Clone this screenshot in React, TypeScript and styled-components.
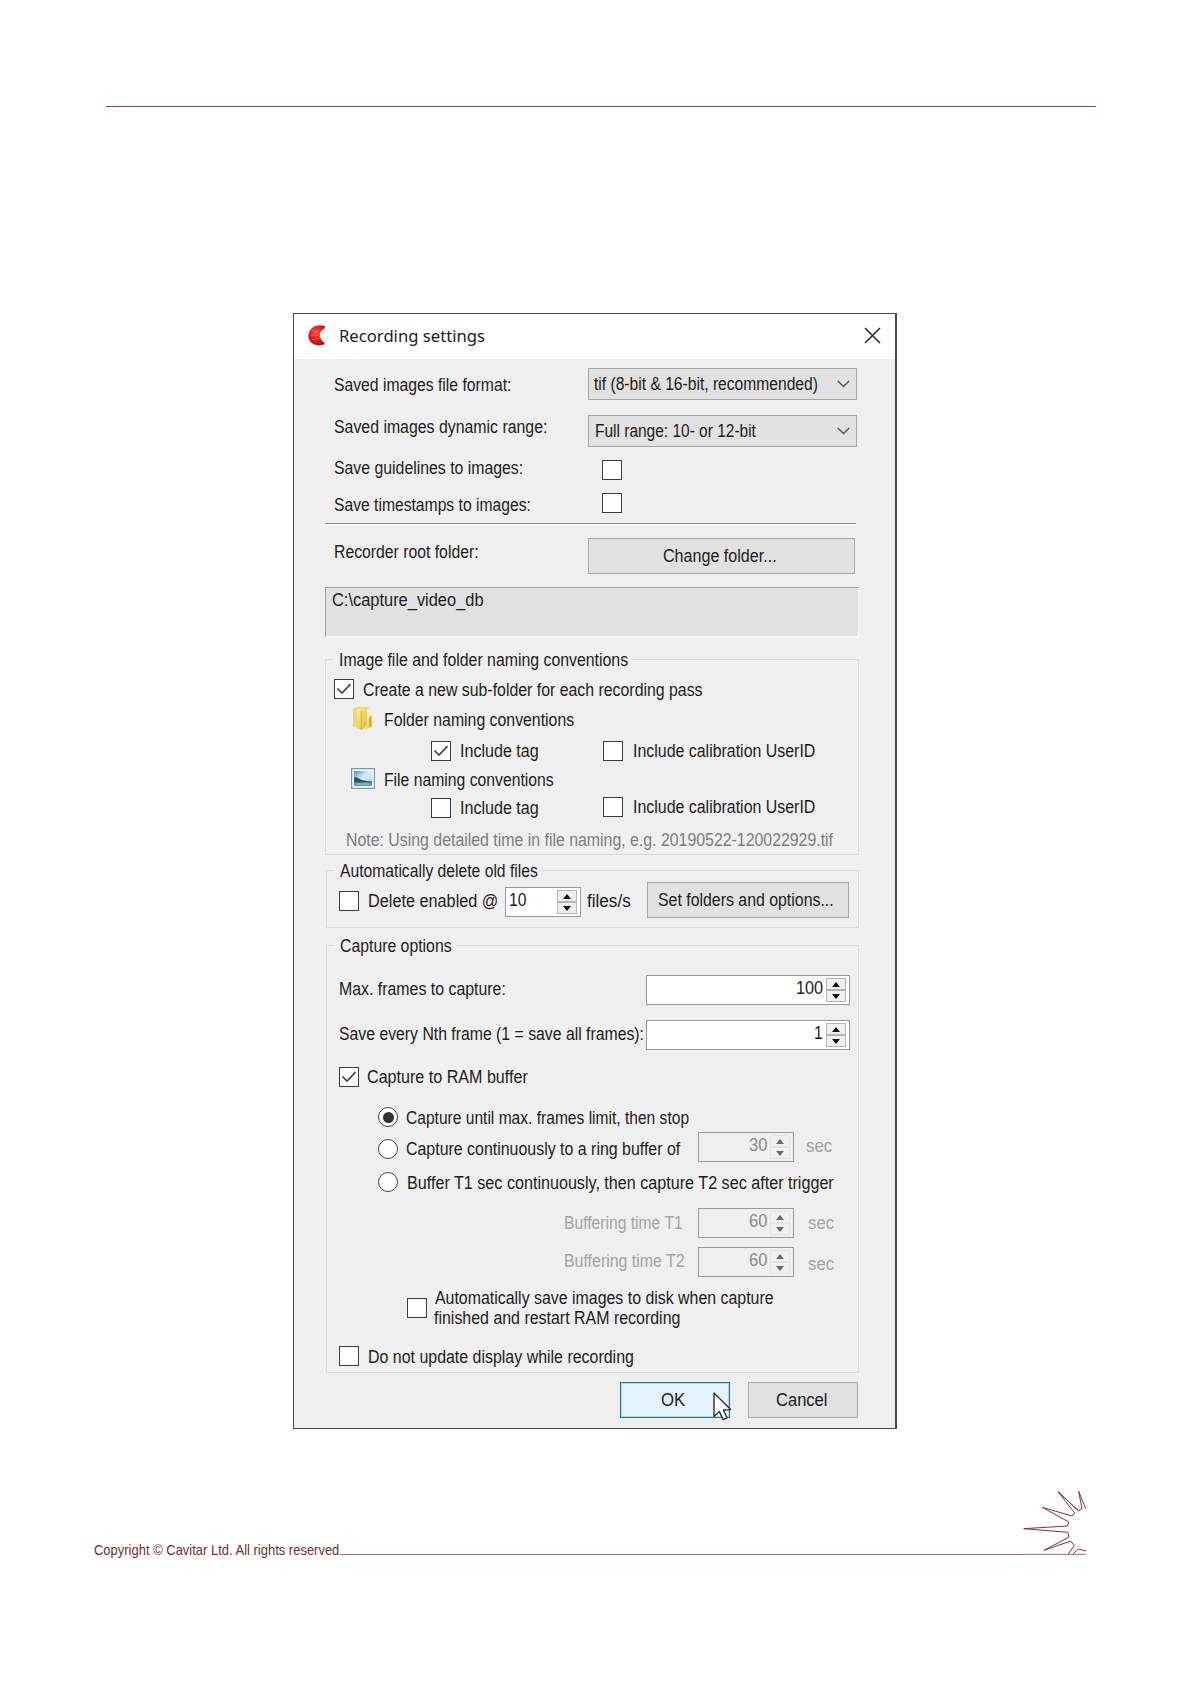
import React, { useLayoutEffect, useRef, useState } from "react";
import styled, { createGlobalStyle, css } from "styled-components";

const App = () => {
  return (
    <Page>
      <GlobalStyle />
      <HeaderRule />
      <Dialog>
        <TitleBar>
          <AppLogo />
          <Title>
            <Fit w={147}>Recording settings</Fit>
          </Title>
          <CloseIcon />
        </TitleBar>

        <Body>
          <Row h={48}>
            <Text gap={8} dy={16} w={178}>Saved images file format:</Text>
            <Select gap={77} dy={9} pad={5}>
              <Fit w={225}>tif (8-bit &amp; 16-bit, recommended)</Fit>
              <ChevronIcon />
            </Select>
          </Row>
          <Row h={46}>
            <Text gap={8} dy={10} w={214}>Saved images dynamic range:</Text>
            <Select gap={41} dy={8} pad={6}>
              <Fit w={162}>Full range: 10- or 12-bit</Fit>
              <ChevronIcon />
            </Select>
          </Row>
          <Row h={33}>
            <Text gap={8} dy={5} w={190}>Save guidelines to images:</Text>
            <Check gap={79} dy={7} />
          </Row>
          <Row h={37}>
            <Text gap={8} dy={9} w={198}>Save timestamps to images:</Text>
            <Check gap={71} dy={7} />
          </Row>
          <Divider />
          <Row h={61}>
            <Text gap={8} dy={16} w={146}>Recorder root folder:</Text>
            <Button gap={109} dy={12} width={267}>
              <Fit w={115}>Change folder...</Fit>
            </Button>
          </Row>
          <PathBox>
            <Fit w={153}>C:\capture_video_db</Fit>
          </PathBox>

          <Group top={10} height={207}>
            <Legend>
              <Fit w={290}>Image file and folder naming conventions</Fit>
            </Legend>
            <Row h={34}>
              <Check gap={8} dy={9} checked />
              <Text gap={8} dy={10} w={341}>Create a new sub-folder for each recording pass</Text>
            </Row>
            <Row h={35}>
              <FolderIcon />
              <Text gap={10} dy={6} w={191}>Folder naming conventions</Text>
            </Row>
            <Row h={27}>
              <Check gap={105} dy={2} checked />
              <Text gap={8} dy={2} w={80}>Include tag</Text>
              <Check gap={64} dy={2} />
              <Text gap={9} dy={2} w={183}>Include calibration UserID</Text>
            </Row>
            <Row h={28}>
              <PictureIcon />
              <Text gap={8} dy={4} w={171}>File naming conventions</Text>
            </Row>
            <Row h={32}>
              <Check gap={105} dy={4} />
              <Text gap={8} dy={4} w={80}>Include tag</Text>
              <Check gap={64} dy={3} />
              <Text gap={9} dy={3} w={183}>Include calibration UserID</Text>
            </Row>
            <Row h={24}>
              <Text gap={19} dy={4} w={488} color="#7d7d7d">
                Note: Using detailed time in file naming, e.g. 20190522-120022929.tif
              </Text>
            </Row>
          </Group>

          <Group top={4} left={1} height={69}>
            <Legend>
              <Fit w={199}>Automatically delete old files</Fit>
            </Legend>
            <Row h={40}>
              <Check gap={12} dy={10} />
              <Text gap={8} dy={10} w={131}>Delete enabled @</Text>
              <Spinner gap={7} dy={6} width={76} value="10" w={18} align="left" />
              <Text gap={5} dy={10} w={45}>files/s</Text>
              <Button gap={16} dy={1} width={202}>
                <Fit w={177}>Set folders and options...</Fit>
              </Button>
            </Row>
          </Group>

          <Group top={6} left={1} height={439}>
            <Legend>
              <Fit w={113}>Capture options</Fit>
            </Legend>
            <Row h={56}>
              <Text gap={11} dy={23} w={168}>Max. frames to capture:</Text>
              <Spinner gap={140} dy={19} width={204} value="100" w={28} />
            </Row>
            <Row h={46}>
              <Text gap={11} dy={12} w={306}>Save every Nth frame (1 = save all frames):</Text>
              <Spinner gap={2} dy={8} width={204} value="1" w={10} />
            </Row>
            <Row h={42}>
              <Check gap={12} dy={9} checked />
              <Text gap={7} dy={9} w={162}>Capture to RAM buffer</Text>
            </Row>
            <Row h={31}>
              <Radio gap={51} dy={7} checked />
              <Text gap={7} dy={8} w={284}>Capture until max. frames limit, then stop</Text>
            </Row>
            <Row h={34}>
              <Radio gap={51} dy={8} />
              <Text gap={7} dy={8} w={275}>Capture continuously to a ring buffer of</Text>
              <Spinner gap={18} dy={1} width={96} value="30" w={19} disabled />
              <Text gap={11} dy={5} w={27} color="#a3a3a3">sec</Text>
            </Row>
            <Row h={41}>
              <Radio gap={51} dy={7} />
              <Text gap={8} dy={8} w={428}>Buffer T1 sec continuously, then capture T2 sec after trigger</Text>
            </Row>
            <Row h={39}>
              <Text gap={236} dy={7} w={120} color="#a3a3a3">Buffering time T1</Text>
              <Spinner gap={15} dy={2} width={96} value="60" w={19} disabled />
              <Text gap={13} dy={7} w={27} color="#a3a3a3">sec</Text>
            </Row>
            <Row h={39}>
              <Text gap={236} dy={6} w={122} color="#a3a3a3">Buffering time T2</Text>
              <Spinner gap={13} dy={2} width={96} value="60" w={19} disabled />
              <Text gap={13} dy={9} w={27} color="#a3a3a3">sec</Text>
            </Row>
            <Row h={56}>
              <Check gap={80} dy={14} />
              <Lines>
                <Text gap={1} dy={4} w={340}>Automatically save images to disk when capture</Text>
                <Text gap={0} dy={0} w={247}>finished and restart RAM recording</Text>
              </Lines>
            </Row>
            <Row h={28}>
              <Check gap={12} dy={6} />
              <Text gap={8} dy={7} w={267}>Do not update display while recording</Text>
            </Row>
          </Group>

          <Row h={46}>
            <Button gap={295} dy={9} width={110} focused>
              <Fit w={25}>OK</Fit>
              <CursorIcon />
            </Button>
            <Button gap={18} dy={9} width={110}>
              <Fit w={52}>Cancel</Fit>
            </Button>
          </Row>
        </Body>
      </Dialog>

      <Footer>
        <Copyright>
          <Fit w={246}>Copyright © Cavitar Ltd. All rights reserved</Fit>
        </Copyright>
        <FooterRule />
        <StarIcon />
      </Footer>
    </Page>
  );
};
export default App;

const Fit = ({ w, children }: { w: number; children: React.ReactNode }) => {
  const ref = useRef<HTMLSpanElement>(null);
  const [scale, setScale] = useState(1);
  useLayoutEffect(() => {
    if (ref.current) setScale((w - 1) / ref.current.offsetWidth);
  }, [w]);
  return (
    <FitBox $w={w}>
      <FitText ref={ref} style={{ transform: `scaleX(${scale})` }}>
        {children}
      </FitText>
    </FitBox>
  );
};

type PlaceProps = { gap?: number; dy?: number };

type TextProps = PlaceProps & { w: number; color?: string; children: React.ReactNode };

const Text = ({ gap, dy, w, color, children }: TextProps) => (
  <Label $gap={gap} $dy={dy} $color={color}>
    <Fit w={w}>{children}</Fit>
  </Label>
);

const Select = ({ gap, dy, pad, children }: PlaceProps & { pad: number; children: React.ReactNode }) => (
  <SelectBox $gap={gap} $dy={dy} $pad={pad}>{children}</SelectBox>
);

type ButtonProps = PlaceProps & { width: number; focused?: boolean; children: React.ReactNode };

const Button = ({ gap, dy, width, focused, children }: ButtonProps) => (
  <PushButton type="button" $gap={gap} $dy={dy} $width={width} $focused={focused}>
    {children}
  </PushButton>
);

const Check = ({ gap, dy, checked }: PlaceProps & { checked?: boolean }) => (
  <CheckBox $gap={gap} $dy={dy}>
    {checked && (
      <svg width="16" height="16" viewBox="0 0 16 16" fill="none">
        <path d="M1.5 7.5 L6 12 L14.5 3.2" stroke="#444" strokeWidth="1.7" />
      </svg>
    )}
  </CheckBox>
);

const Radio = ({ gap, dy, checked }: PlaceProps & { checked?: boolean }) => (
  <RadioRing $gap={gap} $dy={dy}>{checked && <RadioDot />}</RadioRing>
);

type SpinnerProps = PlaceProps & {
  width: number;
  value: string;
  w: number;
  align?: "left" | "right";
  disabled?: boolean;
};

const Spinner = ({ gap, dy, width, value, w, align = "right", disabled }: SpinnerProps) => (
  <SpinBox $gap={gap} $dy={dy} $width={width} $disabled={disabled}>
    <SpinValue $align={align}>
      <Fit w={w}>{value}</Fit>
    </SpinValue>
    <SpinButtons>
      <SpinArrow $disabled={disabled}>
        <svg width="8" height="5" viewBox="0 0 8 5">
          <path d="M0 5 L4 0 L8 5 Z" fill="currentColor" />
        </svg>
      </SpinArrow>
      <SpinArrow $disabled={disabled}>
        <svg width="8" height="5" viewBox="0 0 8 5">
          <path d="M0 0 L4 5 L8 0 Z" fill="currentColor" />
        </svg>
      </SpinArrow>
    </SpinButtons>
  </SpinBox>
);

const AppLogo = () => (
  <svg width="18" height="21" viewBox="0 0 18 21">
    <defs>
      <radialGradient id="logoRed" cx="0.45" cy="0.35" r="0.7">
        <stop offset="0" stopColor="#f8503c" />
        <stop offset="0.5" stopColor="#e01c1c" />
        <stop offset="1" stopColor="#b01014" />
      </radialGradient>
    </defs>
    <path
      d="M17 1.2 C13 -0.4 7 0.2 3.6 3.6 C-0.6 7.8 -0.4 14 3.2 17.6 C6.8 21 13 21.2 17.2 18.8 L16 18.4 L16.4 17 L14.6 17 L14.6 15.4 L12.8 15 L13 13.2 L11.4 12.2 L12.2 10.6 L11.4 9 L12.8 7.8 L12.6 6 L14.6 5.6 L14.6 4 L16.6 3.8 Z"
      fill="url(#logoRed)"
    />
    <path d="M4 5.6 L11.5 7 M2.4 10 L10.6 10.4 M4 14.6 L11.6 13.4" stroke="#ff8a6c" strokeWidth="0.5" />
  </svg>
);

const CloseIcon = () => (
  <svg width="17" height="17" viewBox="0 0 17 17" fill="none">
    <path d="M1 1 L16 16 M16 1 L1 16" stroke="#222" strokeWidth="1.5" />
  </svg>
);

const ChevronIcon = () => (
  <svg width="13" height="8" viewBox="0 0 13 8" fill="none">
    <path d="M0.8 0.9 L6.5 6.6 L12.2 0.9" stroke="#555" strokeWidth="1.4" />
  </svg>
);

const FolderIcon = () => (
  <FolderSvg viewBox="0 0 21 25">
    <defs>
      <linearGradient id="folderFront" x1="0" y1="0" x2="1" y2="1">
        <stop offset="0" stopColor="#f8f0a0" />
        <stop offset="0.6" stopColor="#e9d257" />
        <stop offset="1" stopColor="#d3b22f" />
      </linearGradient>
    </defs>
    <path d="M1 2.5 L6 0.8 L17.5 1.5 L17.5 9 L20.3 12 L20.3 21.5 L12 23 L1 21 Z" fill="#ecd872" />
    <path d="M15 3 L17.5 2.6 L17.5 12 L15 14 Z" fill="#f8f2c4" />
    <path d="M17 12 L19.4 9 L19.4 20 L17 21 Z" fill="#cfae3c" />
    <path d="M5 3.5 L14 1.8 L14.5 18 L9.5 24.3 L5 22 Z" fill="url(#folderFront)" />
    <path d="M9.3 4.5 L9.3 24" stroke="#d2b440" strokeWidth="0.9" />
  </FolderSvg>
);

const PictureIcon = () => (
  <PictureSvg viewBox="0 0 24 21">
    <defs>
      <linearGradient id="sky" x1="0" y1="0" x2="1" y2="1">
        <stop offset="0" stopColor="#3f8fd4" />
        <stop offset="0.45" stopColor="#d8eef6" />
        <stop offset="1" stopColor="#a4d2ea" />
      </linearGradient>
    </defs>
    <rect x="0.6" y="0.6" width="22.8" height="19.8" fill="#f4f8fb" stroke="#7d97a8" strokeWidth="1.2" />
    <rect x="3" y="3" width="18" height="15" fill="url(#sky)" />
    <path d="M3 9.5 C6 8.6 8 11 11 12 C14 13 18 13 21 13.6 L21 15 L3 15 Z" fill="#2c5f4c" />
    <path d="M3 14.4 L21 14.4 L21 18 L3 18 Z" fill="#4f9cb8" />
    <path d="M5 16 L18 16" stroke="#9ad0dc" strokeWidth="1" />
  </PictureSvg>
);

const CursorIcon = () => (
  <CursorSvg viewBox="0 0 19 29">
    <path
      d="M1 1 L1 24.5 L6.4 19.6 L10.2 27.6 L14 25.8 L10.4 18 L17.6 17.6 Z"
      fill="#fff"
      stroke="#2a3038"
      strokeWidth="1.4"
      strokeLinejoin="round"
    />
  </CursorSvg>
);

const StarIcon = () => (
  <StarSvg viewBox="126 60 195 195" fill="none" stroke="#84343a" strokeWidth="3">
    <path d="M317 116 L296 64 L306 116 L295 122 L234 65 M295 122 L234 65 L284 129 L276 138 L187 112 L266 156 L263 168 L131 176 L264 187 L266 202 L192 241 L272 213 L283 227 L264 253" />
    <path d="M278 253 L295 237 L318 243" />
    <path d="M126 253 L318 253" stroke="#a8666a" />
  </StarSvg>
);

const GlobalStyle = createGlobalStyle`
  body {
    margin: 0;
    background: #fff;
  }
`;

const place = css<{ $gap?: number; $dy?: number }>`
  flex: none;
  box-sizing: border-box;
  margin: ${(props) => props.$dy || 0}px 0 0 ${(props) => props.$gap || 0}px;
`;

const Page = styled.div`
  display: flex;
  flex-direction: column;
  width: 1191px;
  height: 1684px;
  overflow: hidden;
  background: #fff;
  color: #1c1c1c;
  font-family: "Liberation Sans", Arial, sans-serif;
  font-size: 17.5px;
  line-height: 20px;
`;

const HeaderRule = styled.div`
  flex: none;
  height: 1px;
  margin: 106px 95px 0 106px;
  background: #8c4a4c;
`;

const Dialog = styled.div`
  flex: none;
  box-sizing: border-box;
  width: 604px;
  height: 1116px;
  margin: 206px 0 0 293px;
  border: 1px solid #4a4a4a;
  border-right-width: 2px;
  background: #efefef;
`;

const TitleBar = styled.div`
  display: flex;
  align-items: center;
  box-sizing: border-box;
  height: 45px;
  padding: 0 14px 3px 14px;
  background: #fff;
`;

const Title = styled.div`
  flex: 1;
  padding: 2px 0 0 12px;
  font-family: "Noto Sans", "Open Sans", sans-serif;
  font-size: 17px;
`;

const Body = styled.div`
  padding: 0 36px 0 31px;
`;

const Row = styled.div<{ h: number }>`
  display: flex;
  align-items: flex-start;
  height: ${(props) => props.h}px;
`;

const FitBox = styled.span<{ $w: number }>`
  display: block;
  flex: none;
  box-sizing: border-box;
  width: ${(props) => props.$w}px;
  padding-left: 0.6px;
  text-align: left;
`;

const FitText = styled.span`
  display: inline-block;
  white-space: nowrap;
  transform-origin: 0 0;
`;

const Label = styled.span<{ $gap?: number; $dy?: number; $color?: string }>`
  ${place}
  height: 20px;
  color: ${(props) => props.$color || "inherit"};
`;

const Lines = styled.div`
  display: flex;
  flex-direction: column;
  padding-left: 6px;
`;

const SelectBox = styled.div<{ $gap?: number; $dy?: number; $pad: number }>`
  ${place}
  display: flex;
  align-items: center;
  justify-content: space-between;
  width: 269px;
  height: 32px;
  padding: 0 6px 0 ${(props) => props.$pad - 1}px;
  border: 1px solid #a6a6a6;
  background: #e1e1e1;
`;

const PushButton = styled.button<{ $gap?: number; $dy?: number; $width: number; $focused?: boolean }>`
  ${place}
  display: flex;
  position: relative;
  align-items: center;
  justify-content: center;
  width: ${(props) => props.$width}px;
  height: 36px;
  padding: 0 4px 0 0;
  border: 1px solid ${(props) => (props.$focused ? "#2f7487" : "#a9a9a9")};
  background: ${(props) => (props.$focused ? "#e3f2fb" : "#e1e1e1")};
  box-shadow: ${(props) => (props.$focused ? "inset 0 0 0 1px #a5dcec" : "none")};
  color: inherit;
  font: inherit;
`;

const CheckBox = styled.span<{ $gap?: number; $dy?: number }>`
  ${place}
  display: flex;
  align-items: center;
  justify-content: center;
  width: 20px;
  height: 20px;
  border: 1.5px solid #3c3c3c;
  background: #fff;
`;

const RadioRing = styled.span<{ $gap?: number; $dy?: number }>`
  ${place}
  display: flex;
  align-items: center;
  justify-content: center;
  width: 20px;
  height: 20px;
  border: 1.5px solid #444;
  border-radius: 50%;
  background: #fff;
`;

const RadioDot = styled.span`
  width: 11px;
  height: 11px;
  border-radius: 50%;
  background: #333;
`;

const SpinBox = styled.div<{ $gap?: number; $dy?: number; $width: number; $disabled?: boolean }>`
  ${place}
  display: flex;
  width: ${(props) => props.$width}px;
  height: 30px;
  padding: 2px;
  border: 1px solid #9a9a9a;
  background: ${(props) => (props.$disabled ? "#efefef" : "#fff")};
  color: ${(props) => (props.$disabled ? "#8a8a8a" : "inherit")};
`;

const SpinValue = styled.div<{ $align: "left" | "right" }>`
  display: flex;
  flex: 1;
  justify-content: ${(props) => (props.$align === "left" ? "flex-start" : "flex-end")};
  padding-right: 3px;
`;

const SpinButtons = styled.div`
  display: flex;
  flex-direction: column;
  width: 20px;
  margin-right: 1px;
`;

const SpinArrow = styled.div<{ $disabled?: boolean }>`
  display: flex;
  flex: 1;
  align-items: center;
  justify-content: center;
  border: 1px solid ${(props) => (props.$disabled ? "#e2e2e2" : "#b4b4b4")};
  background: #efefef;
  color: ${(props) => (props.$disabled ? "#6a6a6a" : "#111")};
`;

const Divider = styled.div`
  height: 1px;
  width: 531px;
  border-bottom: 2px solid #fafafa;
  background: #8f8f8f;
`;

const PathBox = styled.div`
  box-sizing: border-box;
  width: 534px;
  height: 51px;
  padding: 2px 5px;
  border: 1px solid #a0a0a0;
  border-right-color: #fff;
  border-bottom: 2px solid #fafafa;
  background: #e1e1e1;
`;

const Group = styled.fieldset<{ top: number; left?: number; height: number }>`
  box-sizing: border-box;
  width: ${(props) => 534 - (props.left || 0)}px;
  height: ${(props) => props.height}px;
  margin: ${(props) => props.top}px 0 0 ${(props) => props.left || 0}px;
  padding: 0;
  border: 1px solid #dadada;
`;

const Legend = styled.legend`
  height: 22px;
  box-sizing: border-box;
  margin-left: 7px;
  padding: 2px 4px 0 5px;
`;

const FolderSvg = styled.svg`
  flex: none;
  width: 21px;
  height: 25px;
  margin: 2px 0 0 26px;
`;

const PictureSvg = styled.svg`
  flex: none;
  width: 24px;
  height: 21px;
  margin: 2px 0 0 25px;
`;

// The pointer hovers over the bottom right corner of the OK button
const CursorSvg = styled.svg`
  position: absolute;
  left: 92px;
  top: 9px;
  width: 19px;
  height: 29px;
`;

const Footer = styled.div`
  display: flex;
  flex: none;
  align-items: flex-end;
  height: 65px;
  margin: 61px 104px 0 93px;
`;

const Copyright = styled.div`
  height: 15px;
  color: #7a2a2c;
  font-size: 14.3px;
  line-height: 20px;
`;

const FooterRule = styled.div`
  flex: 1;
  height: 1px;
  margin-left: 1px;
  background: #a8666a;
`;

const StarSvg = styled.svg`
  flex: none;
  width: 65px;
  height: 65px;
`;
